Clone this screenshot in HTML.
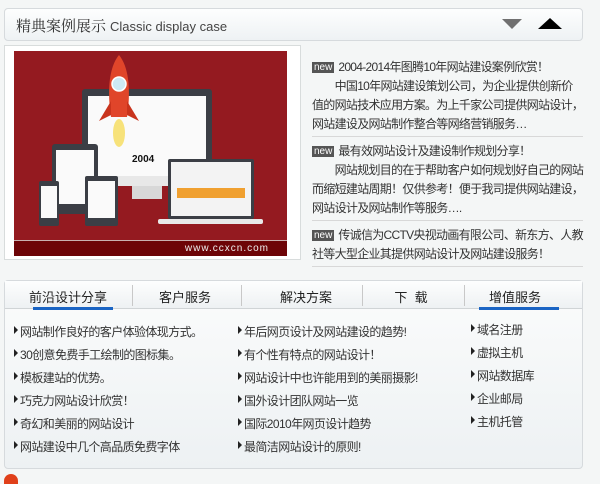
<!DOCTYPE html>
<html><head><meta charset="utf-8"><style>
*{margin:0;padding:0;box-sizing:border-box}
body{width:600px;height:481px;background:#f4f6f6;font-family:"Liberation Sans","Noto Sans CJK SC",sans-serif;font-size:12px;color:#333;position:relative;overflow:hidden}
.hd{position:absolute;left:4px;top:8px;width:579px;height:33px;border:1px solid #d6dadd;border-radius:4px;background:linear-gradient(#fdfefe,#eef2f4)}
.hd .t{position:absolute;left:11px;top:6px;font-size:15px;color:#333;font-family:"Liberation Serif","Noto Serif CJK SC",serif}
.hd .e{font-family:"Liberation Sans",sans-serif;font-size:13px;color:#444;margin-left:4px}
.tri1{position:absolute;left:497px;top:10px;width:0;height:0;border-left:10px solid transparent;border-right:10px solid transparent;border-top:10px solid #707070}
.tri2{position:absolute;left:533px;top:9px;width:0;height:0;border-left:12px solid transparent;border-right:12px solid transparent;border-bottom:11px solid #000}
.frame{position:absolute;left:4px;top:45px;width:297px;height:215px;border:1px solid #d8dcdc;background:#fff}
.pic{position:absolute;left:14px;top:51px;width:273px;height:205px;background:#941a20;overflow:hidden}
.bar{position:absolute;left:0;bottom:0;width:100%;height:16px;background:#6d0407;border-top:1px solid #c9b0b0;color:#eee;font-size:10px;text-align:right;padding-right:18px;letter-spacing:1px;line-height:15px}
.news{position:absolute;left:312px;top:58px;width:271px;letter-spacing:-0.7px;white-space:nowrap}
.n{border-bottom:1px solid #d8d8d8;line-height:19px;padding-bottom:2px;margin-bottom:5px}
.new{display:inline-block;background:#555;color:#fff;font-size:10px;line-height:11px;padding:0 2px;margin-right:4px;vertical-align:1px;letter-spacing:0}
.box{position:absolute;left:4px;top:280px;width:579px;height:189px;border:1px solid #d6dadd;border-radius:4px;background:linear-gradient(#fbfcfc,#edf1f3)}
.tabs{position:absolute;left:0;top:0;width:100%;height:28px;border-bottom:1px solid #d0d4d6;background:linear-gradient(#fdfefe,#eef1f3)}
.tab{position:absolute;top:6px;font-size:13px;color:#222;transform:translateX(-50%);white-space:nowrap}
.dv{position:absolute;top:4px;width:1px;height:21px;background:#c8c8c8}
.ul{position:absolute;top:26px;height:3px;background:#1a64c4}
.col{position:absolute;top:40px;line-height:23px;color:#333;letter-spacing:-0.6px;white-space:nowrap}
.col div:before{content:"";display:inline-block;border-top:4px solid transparent;border-bottom:4px solid transparent;border-left:4px solid #222;margin-right:2px;vertical-align:2px}
</style></head><body>
<div class="hd"><span class="t">精典案例展示<span class="e">Classic display case</span></span><div class="tri1"></div><div class="tri2"></div></div>
<div class="frame"></div>
<div class="pic">
<svg width="273" height="205" style="position:absolute;left:0;top:0">
<rect x="68" y="38" width="130" height="93" rx="3" fill="#3b3e45"/>
<rect x="74" y="45" width="118" height="80" fill="#fafafa"/>
<rect x="74" y="125" width="118" height="10" fill="#e8e8e8"/>
<rect x="118" y="135" width="30" height="13" fill="#d8d8d8"/>
<text x="118" y="111" font-family="Liberation Sans" font-weight="bold" font-size="10" fill="#111">2004</text>
<path d="M105 4 C95 16 93 40 97 66 L113 66 C117 40 115 16 105 4Z" fill="#e0452a"/>
<circle cx="105" cy="33" r="7" fill="#cde9f5" stroke="#fff" stroke-width="1.5"/>
<path d="M97 50 L85 70 L97 64Z M113 50 L125 70 L113 64Z" fill="#c9341d"/>
<ellipse cx="105" cy="82" rx="6" ry="14" fill="#f7e27a"/>
<rect x="38" y="93" width="46" height="70" rx="3" fill="#3b3e45"/><rect x="42" y="99" width="38" height="54" fill="#fafafa"/>
<rect x="25" y="130" width="20" height="45" rx="2" fill="#3b3e45"/><rect x="27" y="135" width="16" height="32" fill="#fafafa"/>
<rect x="71" y="125" width="33" height="50" rx="2" fill="#3b3e45"/><rect x="74" y="130" width="27" height="37" fill="#fafafa"/>
<rect x="154" y="108" width="86" height="60" rx="2" fill="#3b3e45"/><rect x="157" y="111" width="80" height="54" fill="#f3f3f3"/>
<rect x="163" y="137" width="68" height="10" fill="#f0a030"/>
<rect x="144" y="168" width="105" height="5" rx="2" fill="#e9e9e9"/>
</svg>
<div class="bar">www.ccxcn.com</div></div>
<div class="news">
<div class="n"><span class="new">new</span>2004-2014年图腾10年网站建设案例欣赏！<br>&emsp;&emsp;中国10年网站建设策划公司，为企业提供创新价<br>值的网站技术应用方案。为上千家公司提供网站设计，<br>网站建设及网站制作整合等网络营销服务…</div>
<div class="n"><span class="new">new</span>最有效网站设计及建设制作规划分享！<br>&emsp;&emsp;网站规划目的在于帮助客户如何规划好自己的网站<br>而缩短建站周期！仅供参考！便于我司提供网站建设，<br>网站设计及网站制作等服务….</div>
<div class="n"><span class="new">new</span>传诚信为CCTV央视动画有限公司、新东方、人教<br>社等大型企业其提供网站设计及网站建设服务！</div>
</div>
<div class="box">
<div class="tabs">
<span class="tab" style="left:63px">前沿设计分享</span>
<span class="tab" style="left:180px">客户服务</span>
<span class="tab" style="left:301px">解决方案</span>
<span class="tab" style="left:406px">下&nbsp;&nbsp;载</span>
<span class="tab" style="left:510px">增值服务</span>
<div class="dv" style="left:127px"></div><div class="dv" style="left:236px"></div><div class="dv" style="left:357px"></div><div class="dv" style="left:459px"></div>
<div class="ul" style="left:28px;width:80px"></div><div class="ul" style="left:474px;width:80px"></div>
</div>
<div class="col" style="left:9px"><div>网站制作良好的客户体验体现方式。</div><div>30创意免费手工绘制的图标集。</div><div>模板建站的优势。</div><div>巧克力网站设计欣赏！</div><div>奇幻和美丽的网站设计</div><div>网站建设中几个高品质免费字体</div></div>
<div class="col" style="left:233px"><div>年后网页设计及网站建设的趋势!</div><div>有个性有特点的网站设计！</div><div>网站设计中也许能用到的美丽摄影!</div><div>国外设计团队网站一览</div><div>国际2010年网页设计趋势</div><div>最简洁网站设计的原则!</div></div>
<div class="col" style="left:466px;top:38px"><div>域名注册</div><div>虚拟主机</div><div>网站数据库</div><div>企业邮局</div><div>主机托管</div></div>
</div>
<div style="position:absolute;left:4px;top:474px;width:14px;height:10px;background:#e0401a;border-radius:8px 8px 0 0"></div>
</body></html>
